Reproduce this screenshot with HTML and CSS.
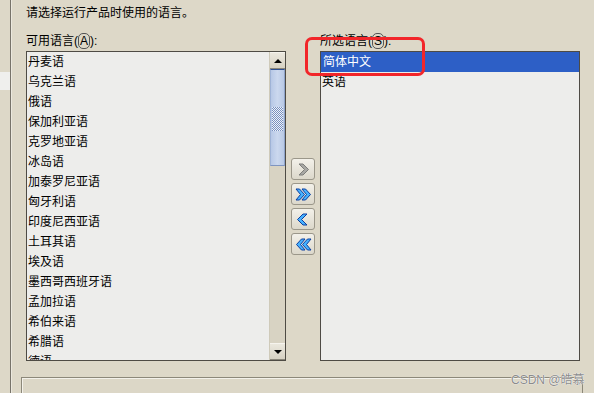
FILE: index.html
```html
<!DOCTYPE html>
<html lang="zh-CN">
<head>
<meta charset="utf-8">
<title>选择语言</title>
<link rel="stylesheet" href="styles.css">
</head>
<body>
<div class="page">
  <div class="side"><div class="side-block"></div></div>
  <div class="main">
    <div class="title">请选择运行产品时使用的语言。</div>
    <div class="columns">
      <div class="col">
        <div class="label">可用语言(<u>A</u>):</div>
        <div class="listbox">
          <ul class="items">
            <li>丹麦语</li>
            <li>乌克兰语</li>
            <li>俄语</li>
            <li>保加利亚语</li>
            <li>克罗地亚语</li>
            <li>冰岛语</li>
            <li>加泰罗尼亚语</li>
            <li>匈牙利语</li>
            <li>印度尼西亚语</li>
            <li>土耳其语</li>
            <li>埃及语</li>
            <li>墨西哥西班牙语</li>
            <li>孟加拉语</li>
            <li>希伯来语</li>
            <li>希腊语</li>
            <li>德语</li>
          </ul>
          <div class="scrollbar">
            <div class="sb-btn"><span class="tri-up"></span></div>
            <div class="sb-track">
              <div class="sb-thumb"><div class="grip"></div></div>
            </div>
            <div class="sb-btn"><span class="tri-down"></span></div>
          </div>
        </div>
      </div>
      <div class="mid">
        <div class="btn disabled">
          <svg width="14" height="13" viewBox="0 0 14 13"><polygon points="3,1 7,1 12.5,6.5 7,12 3,12 8.5,6.5" fill="#a8a8a4" stroke="#7d7d7a" stroke-width="1" stroke-linejoin="round"/></svg>
        </div>
        <div class="btn">
          <svg width="17" height="13" viewBox="0 0 17 13"><polygon points="1,1 4.5,1 9.5,6.5 4.5,12 1,12 5.5,6.5" fill="#46b2ff" stroke="#0d3fa0" stroke-width="1" stroke-linejoin="round"/><polygon points="7,1 10.5,1 15.5,6.5 10.5,12 7,12 11.5,6.5" fill="#46b2ff" stroke="#0d3fa0" stroke-width="1" stroke-linejoin="round"/></svg>
        </div>
        <div class="btn">
          <svg width="14" height="13" viewBox="0 0 14 13"><polygon points="11,1 7,1 1.5,6.5 7,12 11,12 5.5,6.5" fill="#46b2ff" stroke="#0d3fa0" stroke-width="1" stroke-linejoin="round"/></svg>
        </div>
        <div class="btn">
          <svg width="17" height="13" viewBox="0 0 17 13"><polygon points="16,1 12.5,1 7.5,6.5 12.5,12 16,12 11.5,6.5" fill="#46b2ff" stroke="#0d3fa0" stroke-width="1" stroke-linejoin="round"/><polygon points="10,1 6.5,1 1.5,6.5 6.5,12 10,12 5.5,6.5" fill="#46b2ff" stroke="#0d3fa0" stroke-width="1" stroke-linejoin="round"/></svg>
        </div>
      </div>
      <div class="col">
        <div class="label">所选语言(<u>S</u>):</div>
        <div class="listbox">
          <ul class="items">
            <li class="selected">简体中文</li>
            <li>英语</li>
          </ul>
        </div>
      </div>
    </div>
    <div class="bottom-panel"></div>
  </div>
</div>
<div class="highlight"></div>
<div class="watermark">CSDN @皓慕</div>
</body>
</html>
```

FILE: styles.css
```css
html, body {
  margin: 0;
  padding: 0;
}
body {
  width: 594px;
  height: 393px;
  overflow: hidden;
  position: relative;
  background: #ddd8c8;
  font-family: "Liberation Sans", "Noto Sans CJK SC", sans-serif;
  font-size: 12px;
  color: #000;
}
.page {
  display: flex;
  height: 393px;
}
.side {
  width: 10px;
  flex: none;
  border-right: 1px solid #77736a;
  padding-top: 72px;
}
.side-block {
  height: 18px;
  background: #efefed;
}
.main {
  flex: 1;
  border-left: 1px solid #ebe8de;
  padding: 5px 0 0 14px;
  display: flex;
  flex-direction: column;
}
.title {
  line-height: 16px;
  height: 16px;
}
.columns {
  display: flex;
  margin-top: 12px;
}
.col {
  width: 260px;
  display: flex;
  flex-direction: column;
}
.label {
  line-height: 16px;
  height: 16px;
  margin-bottom: 2px;
}
.label u {
  text-decoration: none;
  border: 1px solid #555;
  border-radius: 5px;
  padding: 0 1px;
  line-height: 10px;
}
.listbox {
  height: 308px;
  border: 1px solid #4e4b44;
  background: #ededeb;
  display: flex;
  overflow: hidden;
}
.items {
  list-style: none;
  margin: 0;
  padding: 0;
  flex: 1;
  overflow: hidden;
}
.items li {
  height: 20px;
  line-height: 20px;
  padding-left: 1px;
  white-space: nowrap;
}
.items li.selected {
  background: #2d5fc6;
  color: #fff;
  padding-left: 2px;
}
.scrollbar {
  width: 15px;
  flex: none;
  display: flex;
  flex-direction: column;
  background: #d9d4c4;
  border-left: 1px solid #cfcab9;
}
.sb-btn {
  height: 15px;
  flex: none;
  background: linear-gradient(#ebe8de, #d6d1c2);
  border-top: 1px solid #f6f4ee;
  border-bottom: 1px solid #8a867a;
  display: flex;
  align-items: center;
  justify-content: center;
}
.tri-up {
  width: 0;
  height: 0;
  border-left: 4px solid transparent;
  border-right: 4px solid transparent;
  border-bottom: 4px solid #000;
}
.tri-down {
  width: 0;
  height: 0;
  border-left: 4px solid transparent;
  border-right: 4px solid transparent;
  border-top: 4px solid #000;
}
.sb-track {
  flex: 1;
  background: #d8d3c3;
}
.sb-thumb {
  height: 97px;
  border-top: 1px solid #2d4f92;
  border-left: 1px solid #9fb3d6;
  border-right: 1px solid #8ea3c9;
  border-bottom: 1px solid #7f95c0;
  background: linear-gradient(90deg, #b7c8e6, #cbd8ee 50%, #b9c9e5);
  padding-top: 37px;
  box-sizing: border-box;
}
.grip {
  height: 24px;
  margin: 0 1px;
  background-image: repeating-conic-gradient(#7890bf 0 25%, #eef2f9 0 50%);
  background-size: 2px 2px;
}
.mid {
  width: 34px;
  display: flex;
  flex-direction: column;
  align-items: center;
  padding-top: 125px;
  gap: 3px;
}
.btn {
  width: 22px;
  height: 20px;
  border: 1px solid #9b978a;
  border-radius: 3px;
  background: linear-gradient(#f3f1ea, #dcd8cb);
  display: flex;
  align-items: center;
  justify-content: center;
}
.bottom-panel {
  margin-top: 16px;
  margin-left: -5px;
  width: 560px;
  flex: 1;
  border: 1px solid #8c887a;
  border-bottom: none;
  box-shadow: inset 1px 1px 0 #f3f1ea;
  background: #dcd7c7;
}
.highlight {
  position: absolute;
  left: 305px;
  top: 37px;
  width: 114px;
  height: 33px;
  border: 3px solid #f2262a;
  border-radius: 7px;
}
.watermark {
  position: absolute;
  left: 511px;
  top: 370px;
  font-family: "Liberation Sans", "Noto Sans CJK SC", sans-serif;
  font-size: 12px;
  color: #8b8b8b;
  text-shadow: 0 0 1px #fff, 0 0 1px #fff;
}
```
